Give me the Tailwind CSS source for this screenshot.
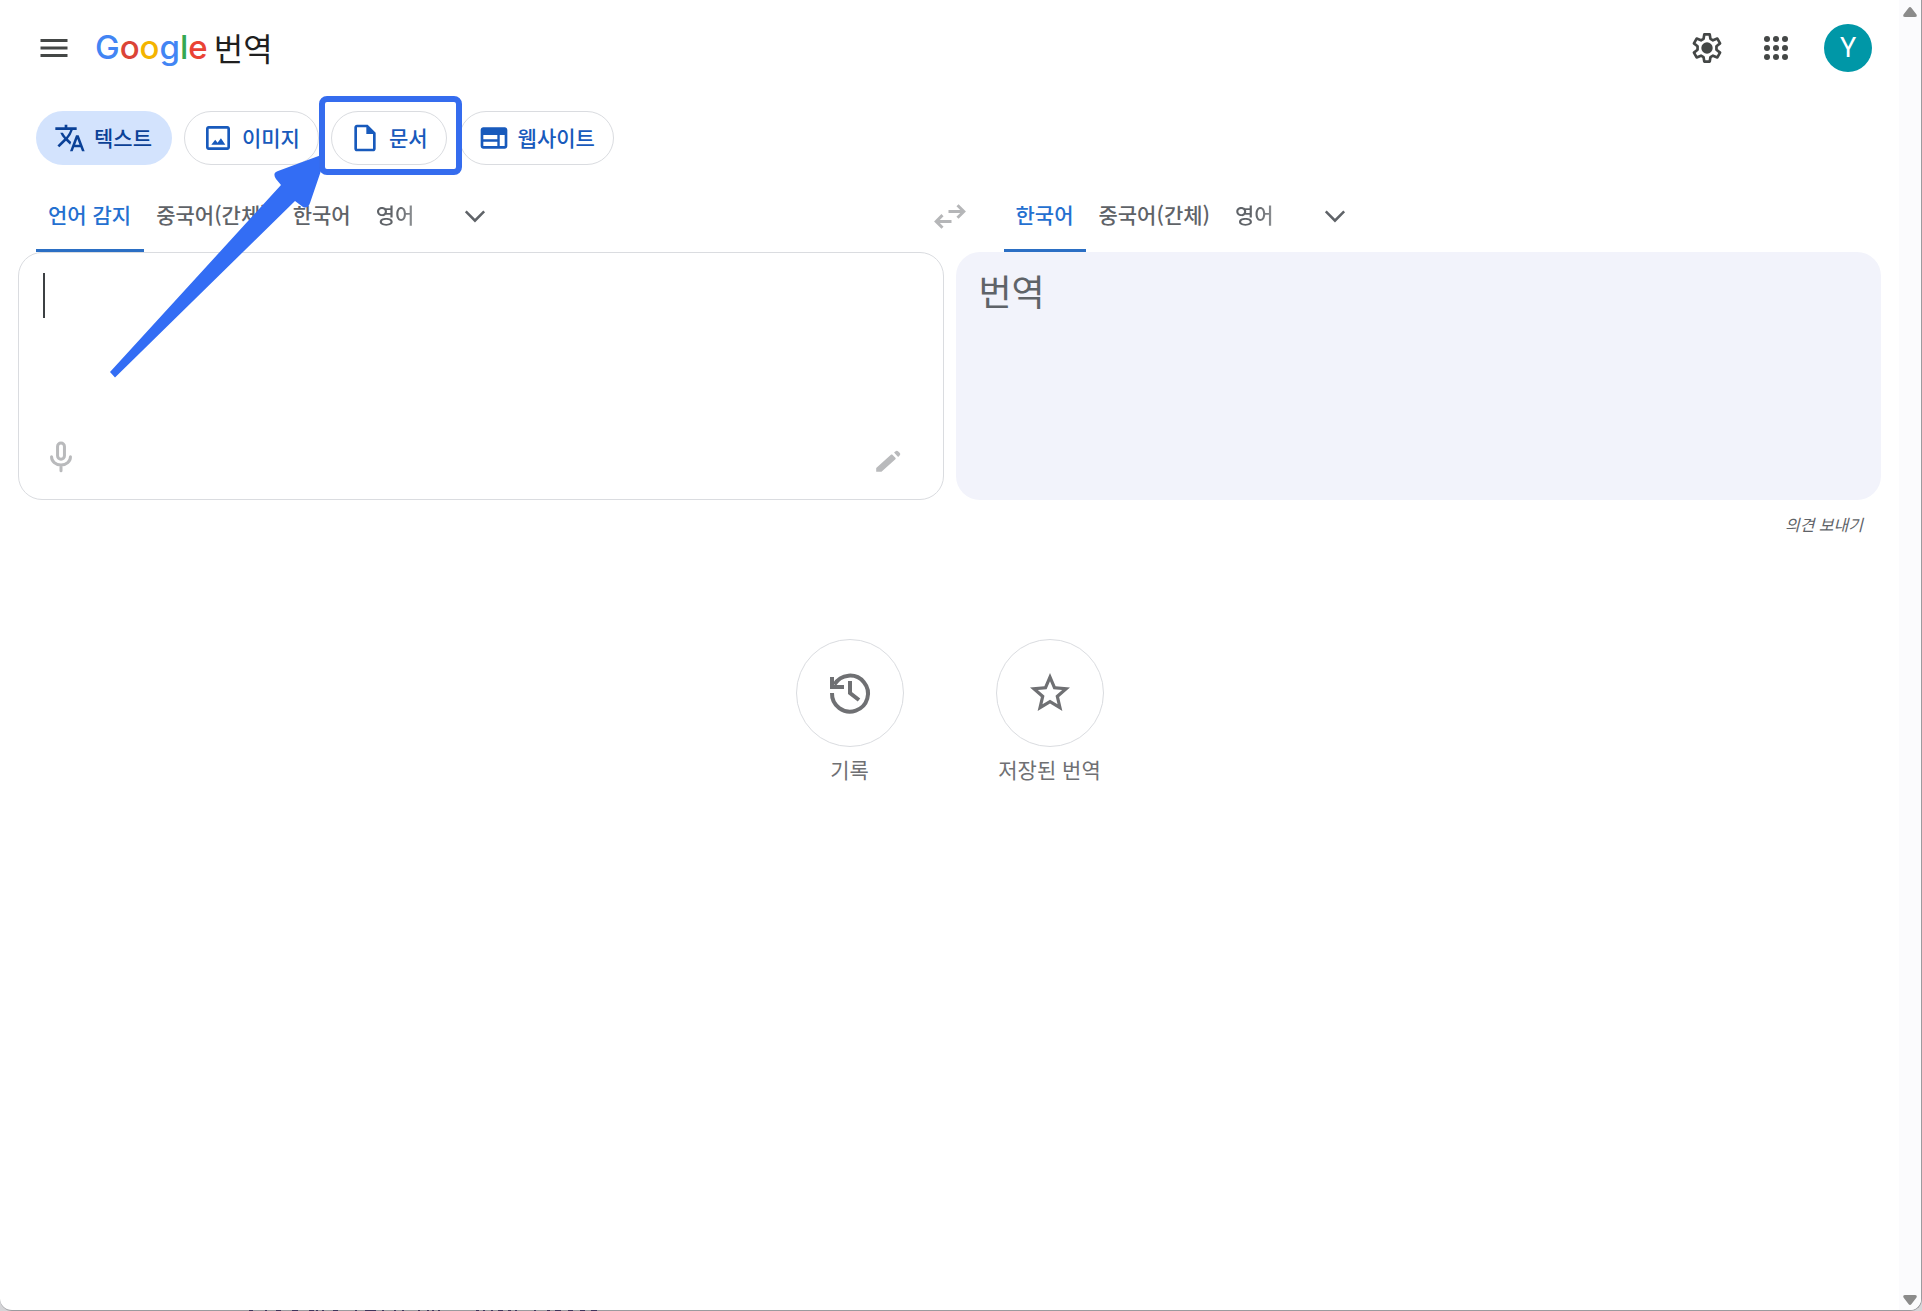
<!DOCTYPE html>
<html lang="ko">
<head>
<meta charset="utf-8">
<meta name="viewport" content="width=device-width, initial-scale=1">
<title>Google 번역</title>
<script src="https://cdn.jsdelivr.net/npm/@tailwindcss/browser@4"></script>
</head>
<body class="bg-[#d5d5d8] font-['Noto_Sans_CJK_KR',sans-serif] text-[21px] text-[#5f6368]">
<div class="relative flex min-h-screen overflow-hidden rounded-b-[12px] border-r border-b border-[#9b9b9f] bg-white">
  <div class="min-w-0 flex-1">
    <header class="flex h-24 items-center pr-[27px] pl-9">
      <button aria-label="기본 메뉴" class="flex size-9 items-center justify-center text-[#444746]">
        <svg class="size-9" viewBox="0 0 24 24" fill="currentColor"><path d="M3 18h18v-2H3v2zm0-5h18v-2H3v2zm0-7v2h18V6H3z"/></svg>
      </button>
      <a href="#" class="ml-[23px] flex items-center gap-[6px] pb-[2px] leading-none">
        <span class="font-['Inter',sans-serif] text-[33px] leading-10 font-medium"><span class="text-[#4285f4]">G</span><span class="text-[#db4437]">o</span><span class="text-[#f4b400]">o</span><span class="text-[#4285f4]">g</span><span class="text-[#34a853]">l</span><span class="text-[#ea4335]">e</span></span>
        <span class="text-[32px] leading-10 text-[#1f1f1f]">번역</span>
      </a>
      <div class="ml-auto flex items-center">
        <button aria-label="설정" class="flex size-[60px] items-center justify-center text-[#444746]">
          <svg class="size-9" viewBox="0 0 24 24" fill="none" stroke="currentColor" stroke-width="1.8" stroke-linejoin="round"><path d="M10.200 2.900h3.600l.5 3 1.700 1 2.900-1.200 1.800 3.200-2.400 1.900v2.400l2.400 1.900-1.800 3.200-2.900-1.200-1.700 1-.5 3h-3.600l-.5-3-1.700-1-2.900 1.200-1.800-3.200 2.400-1.900v-2.400L3.300 8.900l1.800-3.200L8 6.900l1.700-1z"/><circle cx="12" cy="12" r="3.800" fill="currentColor" stroke="none"/></svg>
        </button>
        <button aria-label="Google 앱" class="ml-[9px] flex size-[60px] items-center justify-center text-[#444746]">
          <svg class="size-9" viewBox="0 0 24 24" fill="currentColor"><circle cx="6" cy="6" r="2"/><circle cx="12" cy="6" r="2"/><circle cx="18" cy="6" r="2"/><circle cx="6" cy="12" r="2"/><circle cx="12" cy="12" r="2"/><circle cx="18" cy="12" r="2"/><circle cx="6" cy="18" r="2"/><circle cx="12" cy="18" r="2"/><circle cx="18" cy="18" r="2"/></svg>
        </button>
        <button aria-label="Google 계정" class="ml-[18px] size-12 rounded-full bg-[#0097a7] font-['Roboto',sans-serif] text-[27px] leading-none text-white">Y</button>
      </div>
    </header>

    <nav class="flex gap-3 px-9 pt-[15px] font-medium text-[#185abc]">
      <button class="flex h-[54px] items-center gap-2 rounded-full bg-[#d3e3fd] pr-5 pl-[18px] text-[#0b4197]">
        <svg class="size-8" viewBox="0 0 24 24" fill="currentColor"><path d="M12.870 15.070l-2.540-2.510.03-.03A17.520 17.520 0 0 0 14.070 6H17V4h-7V2H8v2H1v2h11.170C11.500 7.920 10.440 9.750 9 11.350 8.070 10.320 7.300 9.190 6.690 8h-2c.73 1.630 1.730 3.170 2.980 4.560l-5.090 5.020L4 19l5-5 3.110 3.110.76-2.040zM18.500 10h-2L12 22h2l1.120-3h4.750L21 22h2l-4.500-12zm-2.620 7l1.620-4.330L19.120 17h-3.240z"/></svg>
        <span>텍스트</span>
      </button>
      <button class="flex h-[54px] items-center gap-2 rounded-full border border-[#dadce0] pr-[18px] pl-[17px]">
        <svg class="size-8" viewBox="0 0 24 24" fill="currentColor"><path d="M19 5v14H5V5h14m0-2H5c-1.100 0-2 .9-2 2v14c0 1.100.9 2 2 2h14c1.100 0 2-.9 2-2V5c0-1.100-.9-2-2-2z"/><path d="M14.200 12.200l-2.500 3.300-1.800-2.200L7 17h10.500z"/></svg>
        <span>이미지</span>
      </button>
      <div class="relative z-20">
        <button class="flex h-[54px] items-center gap-2 rounded-full border border-[#dadce0] bg-white pr-[18px] pl-[17px]">
          <svg class="size-8" viewBox="0 0 24 24" fill="currentColor"><path d="M14 2H6c-1.100 0-2 .9-2 2v16c0 1.100.9 2 2 2h12c1.100 0 2-.9 2-2V8l-6-6zM6 20V4h7v5h5v11H6z"/></svg>
          <span>문서</span>
        </button>
        <div class="pointer-events-none absolute -top-[15px] -right-[15px] -bottom-[10px] -left-3 rounded-[8px] border-6 border-[#356cee]"></div>
      </div>
      <button class="flex h-[54px] items-center gap-2 rounded-full border border-[#dadce0] pr-[18px] pl-[18px]">
        <svg class="size-8" viewBox="0 0 24 24" fill="currentColor"><path fill-rule="evenodd" d="M20 4H4c-1.100 0-2 .9-2 2v12c0 1.100.9 2 2 2h16c1.100 0 2-.9 2-2V6c0-1.100-.9-2-2-2zM14.500 18H4v-3.200h10.500V18zm0-5H4V9.800h10.500V13zm5.500 5h-3.700V9.800H20V18z"/></svg>
        <span>웹사이트</span>
      </button>
    </nav>

    <main class="px-[18px] pt-[15px]">
      <div class="flex h-[72px] font-medium">
        <div class="flex flex-1 pl-[18px]">
          <button class="border-b-3 border-[#2b6fc4] pr-[13px] pl-3 text-[#2470d0]">언어 감지</button>
          <button class="pr-[13px] pb-[2px] pl-3">중국어(간체)</button>
          <button class="pr-[13px] pb-[2px] pl-3">한국어</button>
          <button class="bg-linear-to-r from-[#5f6368] from-50% to-[#b4b6b8] bg-clip-text pr-[13px] pb-[2px] pl-3 text-transparent">영어</button>
          <button aria-label="출발어 더보기" class="ml-3 flex w-[72px] items-center justify-center">
            <svg class="size-9" viewBox="0 0 24 24" fill="currentColor"><path d="M5.410 7.590L4 9l8 8 8-8-1.410-1.410L12 14.170" transform="translate(1.900 2) scale(.84)"/></svg>
          </button>
        </div>
        <button aria-label="언어 전환" class="flex w-[72px] items-center justify-center text-[#b5b6b8]">
          <svg class="size-9" viewBox="0 0 24 24" fill="none" stroke="currentColor" stroke-width="2"><path d="M11 9h9.500M17 4.800L21.200 9 17 13.200M13 15.600H3.500M7 11.400l-4.200 4.200L7 19.800"/></svg>
        </button>
        <div class="flex flex-1 pl-[18px]">
          <button class="border-b-3 border-[#2b6fc4] pr-[13px] pl-3 text-[#2470d0]">한국어</button>
          <button class="pr-[13px] pb-[2px] pl-3">중국어(간체)</button>
          <button class="bg-linear-to-r from-[#5f6368] from-50% to-[#b4b6b8] bg-clip-text pr-[13px] pb-[2px] pl-3 text-transparent">영어</button>
          <button aria-label="도착어 더보기" class="ml-3 flex w-[72px] items-center justify-center">
            <svg class="size-9" viewBox="0 0 24 24" fill="currentColor"><path d="M5.410 7.590L4 9l8 8 8-8-1.410-1.410L12 14.170" transform="translate(1.900 2) scale(.84)"/></svg>
          </button>
        </div>
      </div>

      <div class="grid grid-cols-2 gap-3">
        <div class="flex h-[248px] flex-col rounded-[24px] border border-[#dadce0] px-6 pt-5 pb-5">
          <div class="flex flex-1 items-start">
            <span class="h-[45px] w-[2px] bg-[#3c4043]"></span>
            <textarea aria-label="원본 텍스트" class="h-full flex-1 resize-none text-[36px] leading-[44px] outline-none"></textarea>
          </div>
          <div class="flex items-center justify-between text-[#b9babc]">
            <button aria-label="음성으로 번역">
              <svg class="size-9" viewBox="0 0 24 24" fill="none" stroke="currentColor" stroke-width="2" stroke-linecap="round"><rect x="9.700" y="2.700" width="4.600" height="10.800" rx="2.300"/><path d="M5.700 11.800c0 3.200 2.700 5.600 6.300 5.600s6.300-2.400 6.300-5.600M12 17.500v3.600"/></svg>
            </button>
            <button aria-label="손글씨 입력" class="mt-2 mr-[14px]">
              <svg class="size-9" viewBox="0 0 24 24" fill="currentColor"><path d="M4.800 19.200v-2.500L14.600 7.900c.3-.3.7-.3 1 0l2 2c.3.300.3.700 0 1L8.300 19.200zM16.700 6.300l.8-.7c.7-.6 1.400-.6 2 0l.9.9c.6.600.6 1.200 0 1.800l-1 1z"/></svg>
            </button>
          </div>
        </div>
        <div class="h-[248px] rounded-[24px] bg-[#f2f3fb] px-[23px] pt-4 text-[36px] leading-[44px]">번역</div>
      </div>

      <div class="flex justify-end px-[18px] pt-3">
        <a href="#" class="text-[16px] leading-6 italic">의견 보내기</a>
      </div>

      <div class="flex justify-center gap-[60px] pt-[103px] text-[#6f7073]">
        <a href="#" class="flex w-[140px] flex-col items-center gap-[6px]">
          <span class="flex size-[108px] items-center justify-center rounded-full border border-[#dadce0]">
            <svg class="size-12" viewBox="0 0 24 24" fill="none" stroke="currentColor" stroke-width="2"><path d="M4.200 7.800A9 9 0 1 1 3 12M3 4v5h6M12 6v6l4.500 3.500"/></svg>
          </span>
          <span class="leading-8 whitespace-nowrap">기록</span>
        </a>
        <a href="#" class="flex w-[140px] flex-col items-center gap-[6px]">
          <span class="flex size-[108px] items-center justify-center rounded-full border border-[#dadce0]">
            <svg class="size-12" viewBox="0 0 24 24" fill="currentColor"><path d="M22 9.240l-7.190-.62L12 2 9.190 8.630 2 9.240l5.460 4.730L5.820 21 12 17.270 18.180 21l-1.630-7.030L22 9.240zM12 15.400l-3.760 2.270 1-4.280-3.320-2.880 4.380-.38L12 6.100l1.710 4.040 4.380.38-3.320 2.880 1 4.280L12 15.400z"/></svg>
          </span>
          <span class="leading-8 whitespace-nowrap">저장된 번역</span>
        </a>
      </div>
    </main>
  </div>

  <!-- Scrollbar -->
  <aside class="flex w-[22px] flex-col items-center justify-between bg-[#fbfbfd] pt-[6px] pb-1">
    <svg class="h-[12px] w-[16px]" viewBox="0 0 16 12" fill="#8b8b8b"><path d="M6.500 2q1.500-2 3 0l5 6.500q1 2.500-1.500 2.500H3q-2.500 0-1.500-2.500z"/></svg>
    <svg class="h-[12px] w-[16px]" viewBox="0 0 16 12" fill="#8b8b8b"><path d="M6.500 10q1.500 2 3 0l5-6.500q1-2.500-1.500-2.500H3Q.5 1 1.500 3.500z"/></svg>
  </aside>

  <!-- Pointer arrow -->
  <svg class="pointer-events-none absolute top-0 left-0 z-10 h-[400px] w-[340px]" viewBox="0 0 340 400" fill="#336df4"><path d="M110 372L281 185l-5-6q-4-6 2-8l46-17v8l-14 41q-2 6-7 4l-8-6L115 377.500z"/></svg>
</div>
<!-- Tips of the content cut off by the window edge -->
<svg class="pointer-events-none absolute bottom-0 left-0 h-px w-[640px]" viewBox="0 0 640 1" fill="#3f355c"><path d="M249 0h4v1h-4zM265 0h2v1h-2zM276 0h5v1h-5zM292 0h6v1h-6zM309 0h5v1h-5zM316 0h2v1h-2zM322 0h2v1h-2zM333 0h5v1h-5zM355 0h2v1h-2zM365 0h11v1h-11zM382 0h2v1h-2zM394 0h2v1h-2zM402 0h2v1h-2zM418 0h2v1h-2zM427 0h2v1h-2zM432 0h2v1h-2zM438 0h2v1h-2zM476 0h3v1h-3zM483 0h2v1h-2zM491 0h2v1h-2zM498 0h5v1h-5zM508 0h3v1h-3zM515 0h2v1h-2zM534 0h2v1h-2zM547 0h3v1h-3zM555 0h6v1h-6zM568 0h5v1h-5zM580 0h5v1h-5zM591 0h6v1h-6z"/></svg>
</body>
</html>
